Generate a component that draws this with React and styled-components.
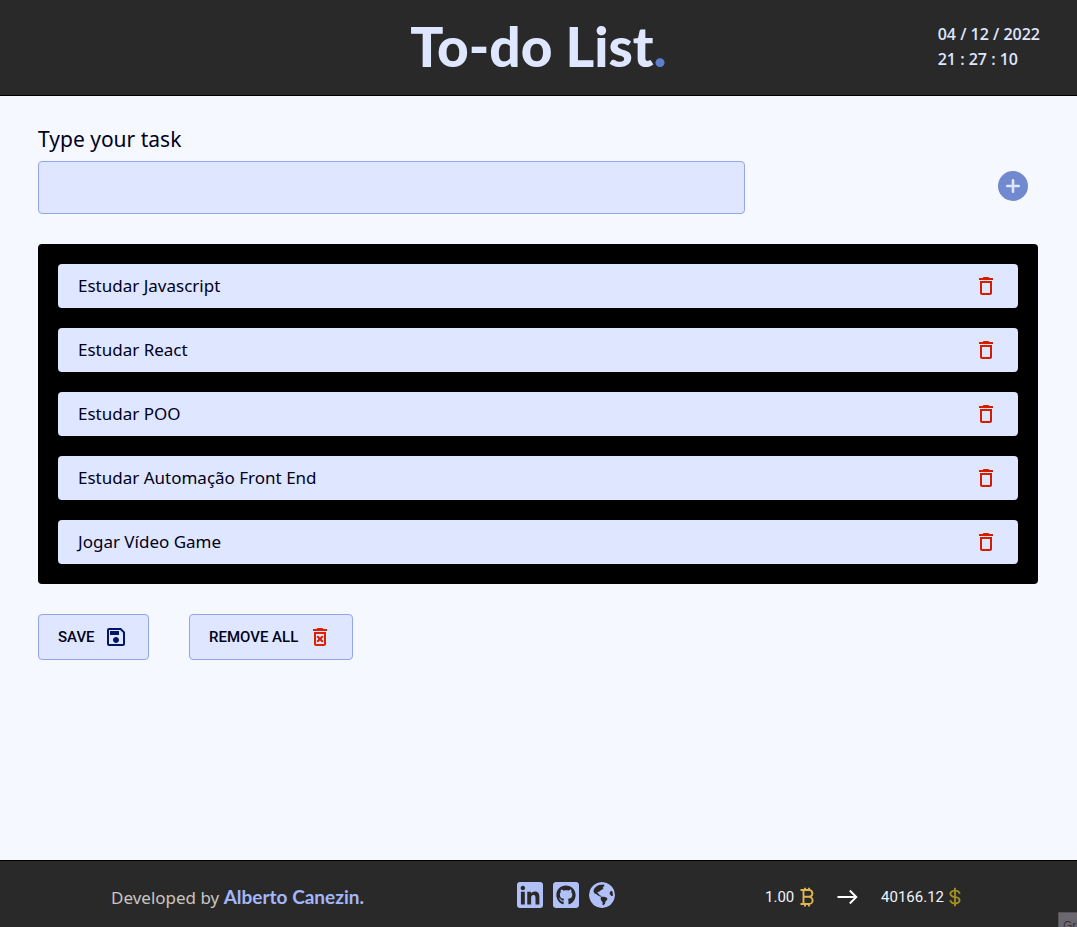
import React, { useState } from 'react';
import styled, { createGlobalStyle } from 'styled-components';
import { MdDeleteOutline, MdOutlineDeleteForever, MdOutlineSave } from 'react-icons/md';
import { FaLinkedin, FaGithubSquare } from 'react-icons/fa';
import { BiDollar } from 'react-icons/bi';

const GlobalStyle = createGlobalStyle`
  * { box-sizing: border-box; margin: 0; padding: 0; }
  body { background: #f5f9ff; color: #00001a; font-family: "Noto Sans", "Open Sans", sans-serif; }
  button { font-family: inherit; cursor: pointer; }
`;

const Page = styled.div`
  min-height: 100vh;
  display: flex;
  flex-direction: column;
`;

const Header = styled.header`
  display: grid;
  grid-template-columns: 1fr auto 1fr;
  align-items: center;
  height: 96px;
  padding: 0 37px;
  background: #292929;
  border-bottom: 1px solid #000;
`;

const Title = styled.h1`
  grid-column: 2;
  padding-bottom: 4px;
  color: #dfe6ff;
  font-family: Lato, sans-serif;
  font-size: 55px;
  line-height: 60px;
  font-weight: 900;
`;

const Dot = styled.span`
  color: #5f7fcb;
`;

const Clock = styled.div`
  justify-self: end;
  padding-bottom: 1px;
  color: #dfe6ff;
  font-family: "Open Sans", sans-serif;
  font-size: 16px;
  line-height: 25px;
  font-weight: 600;
`;

const Main = styled.main`
  flex: 1;
  padding: 28px 39px 30px 38px;
`;

const Form = styled.form`
  display: flex;
  flex-wrap: wrap;
  justify-content: space-between;
  align-items: center;
  padding-right: 10px;
`;

const Label = styled.label`
  flex: 0 0 100%;
  margin-bottom: 7px;
  font-size: 21px;
  line-height: 30px;
`;

const TaskInput = styled.input`
  width: 707px;
  max-width: 80%;
  height: 53px;
  padding: 0 20px;
  font: inherit;
  font-size: 18px;
  background: #dfe6ff;
  border: 1px solid #93a6ea;
  border-radius: 4px;
`;

const AddButton = styled.button`
  width: 30px;
  margin-bottom: 3px;
  background: none;
  border: 0;

  svg { display: block; }
`;

const List = styled.ul`
  display: flex;
  flex-direction: column;
  gap: 20px;
  margin-top: 30px;
  padding: 20px;
  list-style: none;
  background: #000;
  border-radius: 4px;
`;

const Item = styled.li`
  display: flex;
  align-items: center;
  justify-content: space-between;
  height: 44px;
  padding: 0 20px;
  background: #dfe6ff;
  border-radius: 4px;
  font-size: 17px;
  line-height: 24px;
`;

const DeleteButton = styled.button`
  display: flex;
  background: none;
  border: 0;
  color: #d41c00;
  font-size: 24px;
`;

const Actions = styled.div`
  display: flex;
  gap: 40px;
  margin-top: 30px;
`;

const ActionButton = styled.button`
  display: flex;
  align-items: center;
  justify-content: space-between;
  width: ${(p) => p.$width}px;
  height: 46px;
  padding: 0 20px 0 19px;
  background: #dfe6ff;
  border: 1px solid #93a6ea;
  border-radius: 4px;
  color: #00001a;
  font-family: Roboto, sans-serif;
  font-size: 15px;
  font-weight: 500;

  svg { color: ${(p) => p.$icon}; font-size: 24px; }
`;

const Footer = styled.footer`
  display: grid;
  grid-template-columns: 256px 98px 201px;
  column-gap: 150px;
  justify-content: center;
  align-items: center;
  height: 67px;
  padding-top: 6px;
  background: #292929;
  border-top: 1px solid #000;
`;

const Credit = styled.p`
  color: #c9c5c1;
  font-size: 17px;
  line-height: 24px;
  white-space: nowrap;
`;

const Author = styled.a`
  color: #a3b7fb;
  font-family: Lato, sans-serif;
  font-size: 19px;
  font-weight: 700;
  text-decoration: none;
`;

const Social = styled.nav`
  display: flex;
  gap: 10px;
  margin-bottom: 4px;
`;

const SocialLink = styled.a`
  display: flex;
  justify-content: center;
  align-items: center;
  width: 26px;
  height: 26px;
  overflow: hidden;
  border-radius: 3px;
  color: #b1c1f8;
  font-size: 30px;

  svg { flex: none; }
`;

const Rate = styled.div`
  display: flex;
  align-items: center;
  justify-content: space-between;
  color: #f0f4ff;
  font-family: Roboto, sans-serif;
  font-size: 15px;
`;

const Amount = styled.span`
  display: flex;
  align-items: center;
  gap: ${(p) => p.$gap}px;
  color: #f0f4ff;

  svg { color: ${(p) => p.$color}; }
`;

const Hint = styled.div`
  position: fixed;
  right: 0;
  bottom: 0;
  width: 19px;
  height: 15px;
  padding: 5px 0 0 4px;
  overflow: hidden;
  background: #6b676e;
  border: solid #55525a;
  border-width: 1px 0 0 1px;
  color: #39363b;
  font-family: "Liberation Sans", sans-serif;
  font-size: 12px;
  line-height: 16px;
`;

const PlusCircle = () => (
  <svg width="30" height="30" viewBox="0 0 30 30" aria-hidden="true">
    <circle cx="15" cy="15" r="15" fill="#7189cf" />
    <path d="M15 9.3v11.4M9.3 15h11.4" stroke="#dfe6ff" strokeWidth="2.6" strokeLinecap="round" />
  </svg>
);

const Bitcoin = () => (
  <svg width="14" height="20" viewBox="0 0 14 20" fill="none" stroke="currentColor" strokeWidth="1.9" aria-hidden="true">
    <path d="M.5 3H9a3.3 3.3 0 0 1 0 6.8H3.5M9 9.8a3.6 3.6 0 0 1 0 7.2H.5M3.5 3v14M5 .7V3M9 .7V3M5 17v2.4M9 17v2.4" />
  </svg>
);

const Arrow = () => (
  <svg width="21" height="16" viewBox="0 0 21 16" fill="none" stroke="#fff" strokeWidth="1.9" aria-hidden="true">
    <path d="M.5 8h18.8M12.8 1.5 19.3 8l-6.5 6.5" />
  </svg>
);

const Globe = () => (
  <svg width="26" height="26" viewBox="0 0 26 26" aria-hidden="true">
    <circle cx="13" cy="13" r="13" fill="#b1c1f8" />
    <path
      fill="#292929"
      d="M9.8 2.9 14.9 2.6 15.5 4.2 13.6 5 14.5 6.1 13.4 7.6 11.7 8.2 10.7 9.5 9 9.8 8.4 11 9.7 11.7 10.5 13.2 12.6 14.1 11.8 14.8 9.3 13.8 7.9 12.5 5.6 11.6 4.4 9.2 5 7 7.2 4.5ZM12.2 14.8 15.3 14.7 18.4 16 18.1 18 16.6 19.3 16 21.7 14.6 23.2 13.5 22.7 13.6 20.2 12.2 18.5 11.5 16.5ZM20.8 10.2 22.2 8.8 23.6 9.8 24 13.7 22.5 14 20.7 12.3Z"
    />
  </svg>
);

const GlobeLink = styled(SocialLink)`
  border-radius: 50%;
`;

const initialTasks = [
  'Estudar Javascript',
  'Estudar React',
  'Estudar POO',
  'Estudar Automação Front End',
  'Jogar Vídeo Game',
];

export default function App() {
  const [tasks, setTasks] = useState(initialTasks);
  const [text, setText] = useState('');

  const addTask = (event) => {
    event.preventDefault();
    if (!text.trim()) return;
    setTasks([...tasks, text.trim()]);
    setText('');
  };

  return (
    <Page>
      <GlobalStyle />
      <Header>
        <Title>To-do List<Dot>.</Dot></Title>
        <Clock>
          <p>04 / 12 / 2022</p>
          <p>21 : 27 : 10</p>
        </Clock>
      </Header>
      <Main>
        <Form onSubmit={addTask}>
          <Label htmlFor="task">Type your task</Label>
          <TaskInput id="task" type="text" value={text} onChange={(e) => setText(e.target.value)} />
          <AddButton type="submit" aria-label="Add task"><PlusCircle /></AddButton>
        </Form>
        <List>
          {tasks.map((task, index) => (
            <Item key={index}>
              <span>{task}</span>
              <DeleteButton
                type="button"
                aria-label={`Remove ${task}`}
                onClick={() => setTasks(tasks.filter((_, i) => i !== index))}
              >
                <MdDeleteOutline />
              </DeleteButton>
            </Item>
          ))}
        </List>
        <Actions>
          <ActionButton type="button" $width={111} $icon="#00156b">
            SAVE <MdOutlineSave />
          </ActionButton>
          <ActionButton type="button" $width={164} $icon="#dc2000" onClick={() => setTasks([])}>
            REMOVE ALL <MdOutlineDeleteForever />
          </ActionButton>
        </Actions>
      </Main>
      <Footer>
        <Credit>Developed by <Author href="#author">Alberto Canezin.</Author></Credit>
        <Social>
          <SocialLink href="#linkedin" aria-label="LinkedIn"><FaLinkedin /></SocialLink>
          <SocialLink href="#github" aria-label="GitHub"><FaGithubSquare /></SocialLink>
          <GlobeLink href="#site" aria-label="Website"><Globe /></GlobeLink>
        </Social>
        <Rate>
          <Amount $color="#e0b64f" $gap={6}>1.00 <Bitcoin /></Amount>
          <Arrow />
          <Amount $color="#a3921f" $gap={0}>40166.12 <BiDollar size={22} /></Amount>
        </Rate>
      </Footer>
      <Hint>Gr</Hint>
    </Page>
  );
}
